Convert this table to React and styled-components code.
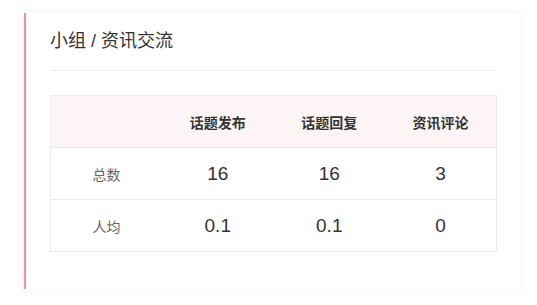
import React from "react";
import styled, { createGlobalStyle } from "styled-components";

const Global = createGlobalStyle`
  body {
    margin: 0;
    background: #ffffff;
    font-family: "Liberation Sans", Arial, "Noto Sans CJK SC", sans-serif;
  }
`;

const Page = styled.div`
  padding: 13px 17px 16px 24px;
`;

const Card = styled.section`
  width: 496px;
  height: 276px;
  box-sizing: border-box;
  background: #fff;
  border-left: 2px solid #ff8a8f;
  box-shadow: 0 0 10px rgba(0, 0, 0, 0.06);
  padding: 16px 23px 0 24px;
`;

const Title = styled.h2`
  margin: 0;
  font-size: 18px;
  font-weight: normal;
  line-height: 24px;
  color: #333;
  padding-bottom: 17px;
  border-bottom: 1px solid #eeeeee;
`;

const Table = styled.table`
  margin-top: 24px;
  width: 447px;
  border-collapse: collapse;
  table-layout: fixed;
`;

const Head = styled.th`
  height: 51px;
  padding: 0;
  background: #fdf5f5;
  border: 1px solid #ebebeb;
  border-left: ${(p) => (p.$first ? "1px solid #ebebeb" : "none")};
  border-right: ${(p) => (p.$last ? "1px solid #ebebeb" : "none")};
  font-size: 14px;
  font-weight: bold;
  color: #333;
  text-align: center;
`;

const Cell = styled.td`
  height: 51px;
  padding: 0;
  border-top: 1px solid #ebebeb;
  border-bottom: 1px solid #ebebeb;
  border-left: ${(p) => (p.$first ? "1px solid #ebebeb" : "none")};
  border-right: ${(p) => (p.$last ? "1px solid #ebebeb" : "none")};
  text-align: center;
  font-size: ${(p) => (p.$label ? "14px" : "19px")};
  color: ${(p) => (p.$label ? "#666" : "#333")};
`;

const cols = ["话题发布", "话题回复", "资讯评论"];
const rows = [
  { label: "总数", values: ["16", "16", "3"] },
  { label: "人均", values: ["0.1", "0.1", "0"] },
];

export default function App() {
  return (
    <>
      <Global />
      <Page>
        <Card>
          <Title>小组 / 资讯交流</Title>
          <Table>
            <thead>
              <tr>
                <Head $first />
                {cols.map((c, i) => (
                  <Head key={c} $last={i === cols.length - 1}>
                    {c}
                  </Head>
                ))}
              </tr>
            </thead>
            <tbody>
              {rows.map((r) => (
                <tr key={r.label}>
                  <Cell $first $label>
                    {r.label}
                  </Cell>
                  {r.values.map((v, i) => (
                    <Cell key={i} $last={i === r.values.length - 1}>
                      {v}
                    </Cell>
                  ))}
                </tr>
              ))}
            </tbody>
          </Table>
        </Card>
      </Page>
    </>
  );
}
